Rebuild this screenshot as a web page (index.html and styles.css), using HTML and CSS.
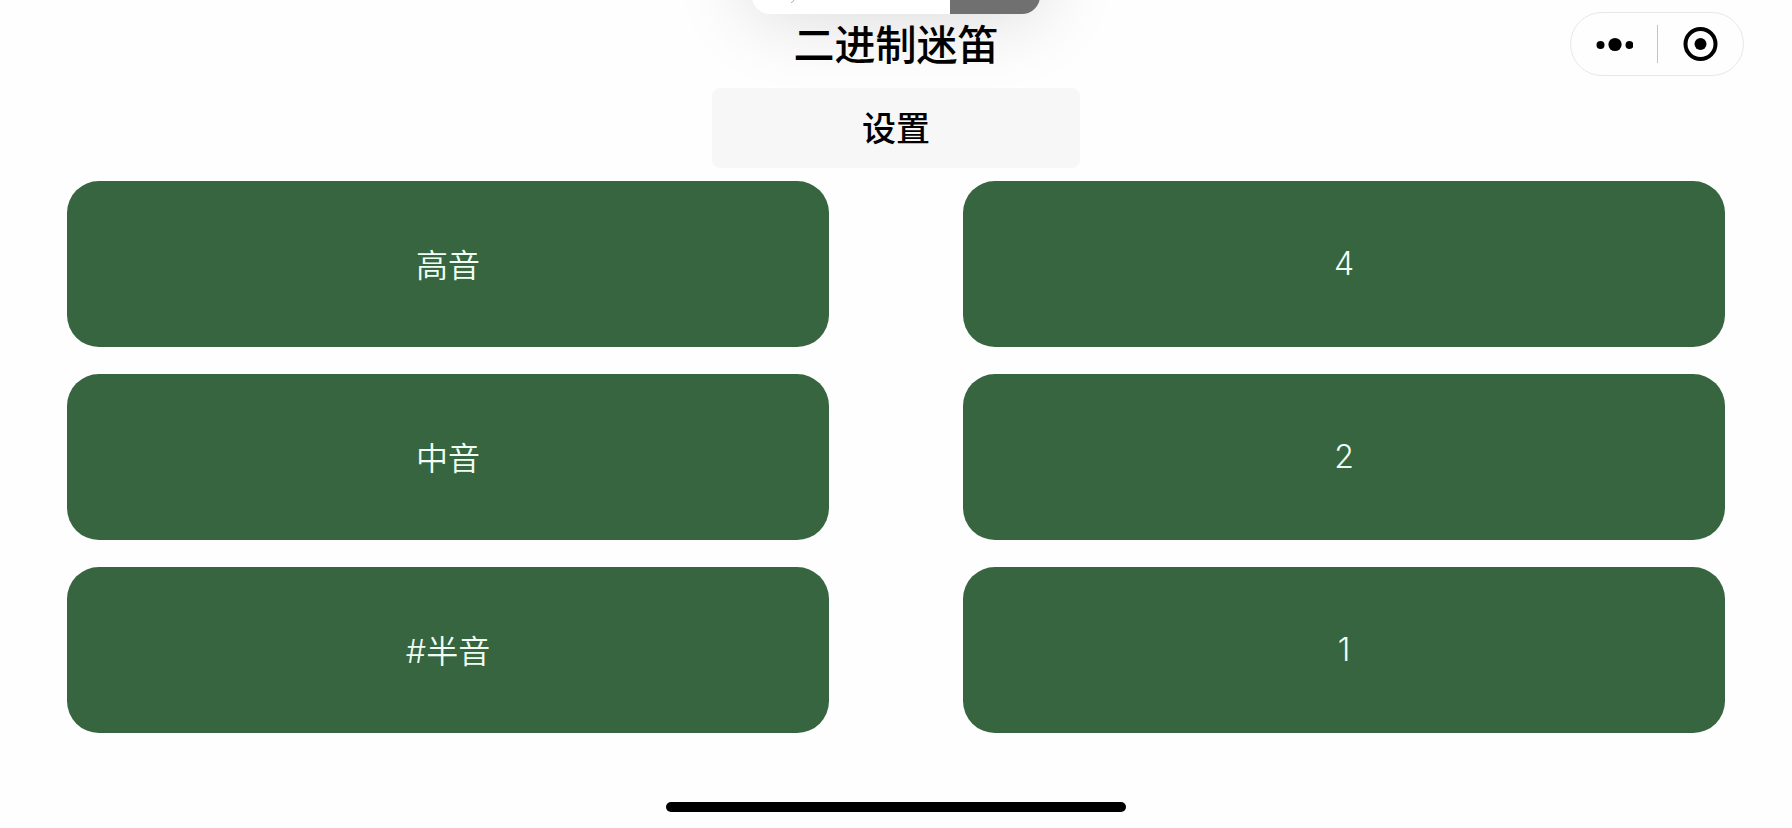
FILE: index.html
```html
<!DOCTYPE html>
<html lang="zh-CN">
<head>
<meta charset="utf-8">
<meta name="viewport" content="width=device-width, initial-scale=1">
<title>二进制迷笛</title>
<link rel="stylesheet" href="styles.css">
</head>
<body>
<div class="app">
  <div class="banner" aria-hidden="true">
    <svg class="banner-mark" viewBox="0 0 4 3"><path d="M0 3Q2 2 3 0" fill="none" stroke="currentColor"/></svg>
    <div class="banner-action"></div>
  </div>
  <header class="navbar">
    <h1 class="title">二进制迷笛</h1>
    <div class="capsule">
      <button class="capsule-button" type="button" aria-label="更多">
        <svg class="icon" viewBox="0 0 38 38"><circle cx="5.5" cy="20" r="4"/><circle cx="20" cy="19.5" r="6.6"/><circle cx="34.5" cy="20" r="4"/></svg>
      </button>
      <button class="capsule-button" type="button" aria-label="关闭">
        <svg class="icon" viewBox="0 0 38 38"><circle cx="18.5" cy="19" r="15" fill="none" stroke="currentColor" stroke-width="4"/><circle cx="18.5" cy="19" r="6"/></svg>
      </button>
    </div>
  </header>
  <button class="settings" type="button">设置</button>
  <main class="keys">
    <button class="key" type="button">高音</button>
    <button class="key" type="button">4</button>
    <button class="key" type="button">中音</button>
    <button class="key" type="button">2</button>
    <button class="key" type="button">#半音</button>
    <button class="key" type="button">1</button>
  </main>
  <div class="home-indicator"></div>
</div>
</body>
</html>
```
FILE: styles.css
```css
* {
  box-sizing: border-box;
}

body {
  margin: 0;
  background: #fefefe;
  color: #000;
  font-family: "Noto Sans CJK SC", sans-serif;
}

.app {
  position: relative;
  display: flex;
  flex-direction: column;
  align-items: center;
  min-height: 100vh;
  padding-bottom: 16px;
  overflow: hidden;
}

button {
  margin: 0;
  padding: 0;
  border: 0;
  background: none;
  color: inherit;
  font: inherit;
  cursor: pointer;
}

.banner {
  position: absolute;
  top: -86px;
  left: 50%;
  display: flex;
  justify-content: flex-end;
  align-items: flex-end;
  width: 288px;
  height: 100px;
  margin-left: -144px;
  border-radius: 18px;
  background: #fff;
  box-shadow: 0 0 80px rgba(0, 0, 0, 0.16);
  overflow: hidden;
}

.banner-mark {
  width: 4px;
  height: 3px;
  margin: 0 155px 11px 0;
  color: #aaa;
}

.banner-action {
  width: 90px;
  height: 100px;
  background: #707070;
}

.navbar {
  position: relative;
  display: grid;
  grid-template-columns: 1fr auto 1fr;
  align-items: center;
  width: 100%;
  height: 88px;
  padding: 0 48px;
}

.title {
  grid-column: 2;
  margin: 0;
  padding-bottom: 4px;
  font-size: 41px;
  font-weight: 500;
  line-height: 60px;
}

.capsule {
  display: flex;
  justify-self: end;
  width: 174px;
  height: 64px;
  border: 1px solid #e8e8e8;
  border-radius: 32px;
  background: #fefefe;
}

.capsule-button {
  display: flex;
  flex: 1;
  align-items: center;
  justify-content: center;
}

.capsule-button + .capsule-button::before {
  content: "";
  width: 1px;
  height: 38px;
  margin-right: 24px;
  background: #c4c4c4;
}

.capsule-button + .capsule-button {
  justify-content: flex-start;
}

.icon {
  width: 38px;
  height: 38px;
  fill: currentColor;
}

.settings {
  position: relative;
  width: 368px;
  height: 80px;
  padding-bottom: 4px;
  border-radius: 8px;
  background: #f7f7f7;
  font-size: 34px;
  font-weight: 500;
}

.keys {
  display: grid;
  flex: 1;
  grid-template-columns: 1fr 1fr;
  gap: 27px 134px;
  width: 100%;
  margin: 13px 0 69px;
  padding: 0 67px;
}

.key {
  min-height: 96px;
  padding-bottom: 2px;
  border-radius: 32px;
  background: #376540;
  color: #f0fff5;
  font-family: Inter, "Noto Sans CJK SC", sans-serif;
  font-size: 32px;
  font-weight: 350;
}

.home-indicator {
  width: 460px;
  max-width: 60%;
  height: 10px;
  border-radius: 5px;
  background: #000;
}
```
